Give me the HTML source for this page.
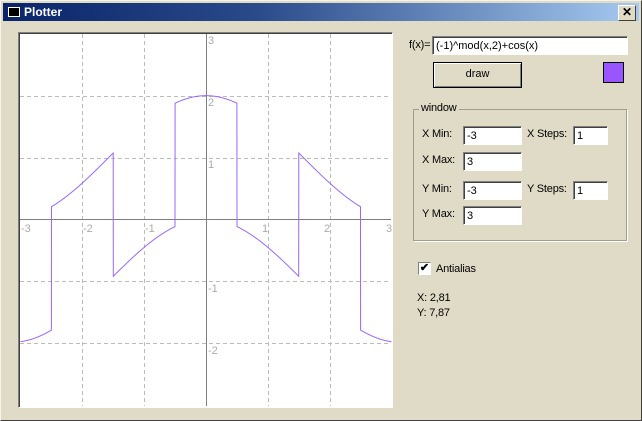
<!DOCTYPE html>
<html><head><style>
body{margin:0;width:642px;height:421px;overflow:hidden;background:#e0dbc7;font-family:"Liberation Sans",sans-serif;font-size:11px;}
.win{position:absolute;left:0;top:0;width:640px;height:419px;border:1px solid #f5f3ea;border-right-color:#404040;border-bottom-color:#404040;background:#e0dbc7;}
.title{position:absolute;left:2px;top:2px;width:636px;height:18px;background:linear-gradient(90deg,#0a246a,#2a4a8a 40%,#a6caf0);color:#fff;font-weight:bold;font-size:12px;line-height:18px;}
.close{position:absolute;right:3px;top:2px;width:16px;height:14px;background:#e0dbc7;border:1px solid #fff;border-right-color:#404040;border-bottom-color:#404040;color:#000;font-size:12px;line-height:13px;text-align:center;font-weight:bold}
.a{position:absolute}
.tb{position:absolute;background:#fff;border:1px solid #808080;border-right-color:#fff;border-bottom-color:#fff;box-shadow:inset 1px 1px 0 #404040;font-size:11px;line-height:18px;padding-left:3px;box-sizing:border-box;}
.lbl{position:absolute;font-size:11px;color:#000;letter-spacing:-0.2px}
</style></head><body>
<div class="win">
<div class="title"><span style="position:absolute;left:5px;top:4px;width:10px;height:8px;border:1px solid #fff;background:#000"></span><span style="position:absolute;left:21px">Plotter</span><div class="close">✕</div></div>
</div>
<div class="a" style="left:18px;top:32px;width:373px;height:374px;border:1px solid #808080;border-right-color:#fff;border-bottom-color:#fff;box-shadow:inset 1px 1px 0 #404040;background:#fff"></div>
<svg class="a" style="left:0;top:0" width="642" height="421" id="s">
<g stroke="#bbb" stroke-dasharray="4,3" stroke-width="1">
<line x1="82.5" y1="34" x2="82.5" y2="406"/><line x1="144.5" y1="34" x2="144.5" y2="406"/><line x1="268.5" y1="34" x2="268.5" y2="406"/><line x1="330.5" y1="34" x2="330.5" y2="406"/>
<line x1="20" y1="96.5" x2="391" y2="96.5"/><line x1="20" y1="158.5" x2="391" y2="158.5"/><line x1="20" y1="281.5" x2="391" y2="281.5"/><line x1="20" y1="343.5" x2="391" y2="343.5"/>
</g>
<g stroke="#808080"><line x1="20" y1="219.5" x2="391" y2="219.5"/><line x1="206.5" y1="34" x2="206.5" y2="406"/></g>
<g fill="#aaa" font-size="11" font-family="Liberation Sans">
<text x="21" y="232">-3</text><text x="83" y="232">-2</text><text x="145" y="232">-1</text><text x="262" y="232">1</text><text x="324" y="232">2</text><text x="386" y="232">3</text>
<text x="208" y="44">3</text><text x="208" y="106">2</text><text x="208" y="168">1</text><text x="208" y="292">-1</text><text x="208" y="354">-2</text>
</g>
<path id="p" fill="none" stroke="#9966ff" stroke-width="1"/>
</svg>
<script>
var d="",first=true;
for(var i=0;i<=3710;i++){var x=-3+i*6/3710;var r=Math.round(x);var y=(r%2==0?1:-1)+Math.cos(x);
var px=206+x*61.83,py=219-y*61.67;d+=(first?"M":"L")+px.toFixed(2)+" "+py.toFixed(2);first=false;}
document.getElementById("p").setAttribute("d",d);
</script>
<span class="lbl" style="left:409px;top:39px">f(x)=</span>
<div class="tb" style="left:432px;top:36px;width:196px;height:19px">(-1)^mod(x,2)+cos(x)</div>
<div class="a" style="left:433px;top:62px;width:89px;height:26px;border:1px solid #000;box-sizing:border-box;background:#e0dbc7;box-shadow:inset 1px 1px 0 #fff,inset -1px -1px 0 #808080;text-align:center;line-height:23px;font-size:11px">draw</div>
<div class="a" style="left:603px;top:62px;width:21px;height:21px;border:1px solid #000;box-sizing:border-box;background:#9955ff"></div>
<div class="a" style="left:413px;top:109px;width:214px;height:132px;border:1px solid #a09d8e;box-shadow:1px 1px 0 #fff;box-sizing:border-box"></div>
<span class="lbl" style="left:419px;top:102px;background:#e0dbc7;padding:0 2px">window</span>
<span class="lbl" style="left:422px;top:128px">X Min:</span><div class="tb" style="left:463px;top:126px;width:59px;height:19px">-3</div>
<span class="lbl" style="left:527px;top:128px">X Steps:</span><div class="tb" style="left:573px;top:126px;width:35px;height:19px">1</div>
<span class="lbl" style="left:422px;top:154px">X Max:</span><div class="tb" style="left:463px;top:152px;width:59px;height:19px">3</div>
<span class="lbl" style="left:422px;top:183px">Y Min:</span><div class="tb" style="left:463px;top:181px;width:59px;height:19px">-3</div>
<span class="lbl" style="left:527px;top:183px">Y Steps:</span><div class="tb" style="left:573px;top:181px;width:35px;height:19px">1</div>
<span class="lbl" style="left:422px;top:208px">Y Max:</span><div class="tb" style="left:463px;top:206px;width:59px;height:19px">3</div>
<div class="a" style="left:418px;top:262px;width:13px;height:13px;background:#fff;border:1px solid #808080;border-right-color:#fff;border-bottom-color:#fff;box-sizing:border-box;font-size:11px;line-height:11px;text-align:center;font-weight:bold">✔</div>
<span class="lbl" style="left:436px;top:263px">Antialias</span>
<span class="lbl" style="left:417px;top:292px">X: 2,81</span>
<span class="lbl" style="left:417px;top:307px">Y: 7,87</span>
</body></html>
